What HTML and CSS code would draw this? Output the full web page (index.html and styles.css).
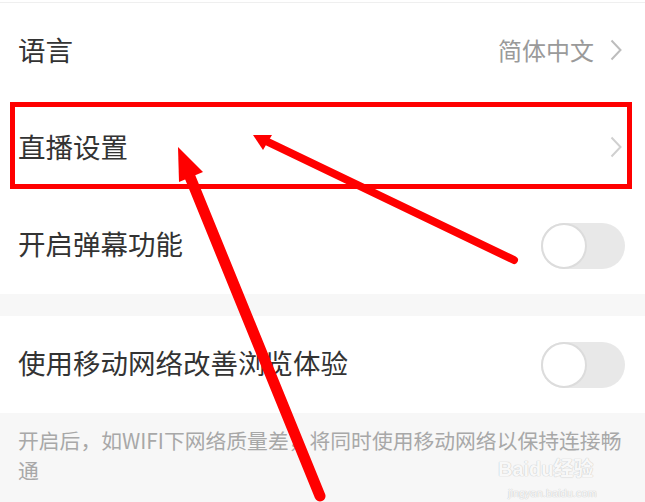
FILE: index.html
```html
<!DOCTYPE html>
<html lang="zh-CN">
<head>
    <meta charset="UTF-8">
    <title>设置</title>
    <link rel="stylesheet" href="styles.css">
</head>
<body>
    <div class="page">
        <div class="group">
            <div class="row">
                <span class="label">语言</span>
                <span class="value">简体中文</span>
                <svg class="chevron" viewBox="0 0 12 22"><path d="M1.5 1.5 L10.5 11 L1.5 20.5" /></svg>
            </div>
            <div class="row">
                <span class="label">直播设置</span>
                <svg class="chevron light" viewBox="0 0 12 22"><path d="M1.5 1.5 L10.5 11 L1.5 20.5" /></svg>
            </div>
            <div class="row">
                <span class="label">开启弹幕功能</span>
                <div class="switch"><div class="knob"></div></div>
            </div>
        </div>

        <div class="spacer"></div>

        <div class="group">
            <div class="row">
                <span class="label">使用移动网络改善浏览体验</span>
                <div class="switch"><div class="knob"></div></div>
            </div>
        </div>

        <div class="note">开启后，如WIFI下网络质量差，将同时使用移动网络以保持连接畅通</div>

        <!-- watermark -->
        <div class="mark">
            <div class="mark-logo">Baidu经验</div>
            <div class="mark-url">jingyan.baidu.com</div>
        </div>

        <!-- annotation: red box and arrows -->
        <svg class="annot" viewBox="0 0 645 502">
            <rect x="12.5" y="102.5" width="617" height="82" fill="none" stroke="#ff0000" stroke-width="5" />
            <line x1="320" y1="494" x2="186" y2="165" stroke="#ff0000" stroke-width="11" stroke-linecap="round" />
            <polygon points="178,145 203,170 179,180" fill="#ff0000" />
            <line x1="514" y1="258" x2="268" y2="140" stroke="#ff0000" stroke-width="8" stroke-linecap="round" />
            <polygon points="253,133 272,133 263,148" fill="#ff0000" />
        </svg>
    </div>
</body>
</html>
```

FILE: styles.css
```css
/* Settings page */
body {
    margin: 0;
    padding: 0;
    background-color: #f7f7f7;
    font-family: "Noto Sans CJK SC", "Noto Sans", sans-serif;
}

.page {
    position: relative;
    width: 645px;
    height: 502px;
    overflow: hidden;
    background-color: #f7f7f7;
    border-top: 2px solid #ffffff;
}

.group {
    background-color: white;
    border-top: 1px solid #efefef;
}

.row {
    display: flex;
    align-items: center;
    height: 97px;
    padding: 0 20px 0 18px;
}

.label {
    flex: 1;
    font-size: 27.5px;
    color: #333;
    margin-bottom: 5px;
}

.value {
    font-size: 24px;
    color: #9a9a9a;
    margin-right: 16px;
    margin-bottom: 5px;
}

.chevron {
    width: 12px;
    height: 22px;
    margin-right: 3px;
    margin-bottom: 3px;
}

.chevron path {
    fill: none;
    stroke: #bdbdbd;
    stroke-width: 2;
}

.chevron.light path {
    stroke: #d0d0d0;
}

.switch {
    width: 84px;
    height: 46px;
    border-radius: 23px;
    background-color: #e8e8e8;
    display: flex;
    align-items: center;
}

.knob {
    width: 42px;
    height: 42px;
    border-radius: 50%;
    background-color: white;
    border: 2px solid #dcdcdc;
}

.spacer {
    height: 22px;
}

.group + .spacer + .group {
    border-top: none;
}

.note {
    padding: 12px 18px 0 18px;
    font-size: 20.8px;
    line-height: 30px;
    color: #a8a8a8;
}

.mark {
    position: absolute;
    left: 498px;
    top: 455px;
    color: rgba(255, 255, 255, 0.9);
    text-shadow: 0 0 1px #c8c8c8, 0 0 1px #c8c8c8;
    font-family: "Liberation Sans", "Noto Sans CJK SC", sans-serif;
}

.mark-logo {
    font-size: 20px;
    font-weight: bold;
    line-height: 24px;
}

.mark-url {
    font-size: 11px;
    line-height: 13px;
    margin-top: 6px;
    padding-left: 10px;
}

.annot {
    position: absolute;
    left: 0;
    top: 0;
    width: 645px;
    height: 502px;
}
```
